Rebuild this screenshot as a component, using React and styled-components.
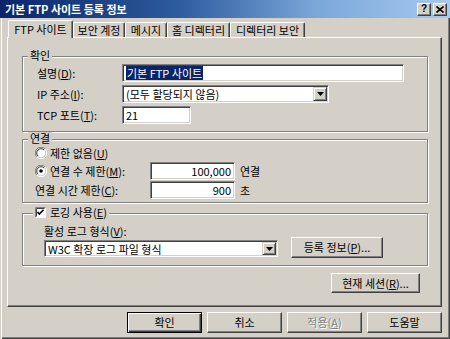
import React from "react";
import styled, { createGlobalStyle, css } from "styled-components";

const FACE = "#d4d0c8";

const GlobalStyle = createGlobalStyle`
  html, body { margin: 0; padding: 0; }
  body {
    width: 450px; height: 339px; overflow: hidden; background: ${FACE};
    font-family: "Noto Sans CJK KR", "Noto Sans", sans-serif;
    font-size: 11px; color: #000;
  }
  * { box-sizing: border-box; }
`;

const Window = styled.div`
  width: 450px; height: 339px;
  display: flex; flex-direction: column;
  background: ${FACE};
`;

const TitleBar = styled.div`
  height: 18px; flex: none;
  display: flex; align-items: center; justify-content: space-between;
  padding: 0 3px 0 5px;
  background: linear-gradient(to right, #0a246a 0%, #2e5c9e 40%, #7aa6d8 70%, #a6caf0 100%);
`;

const Title = styled.div`
  color: #fff; font-weight: bold; font-size: 11px; line-height: 13px; white-space: nowrap;
`;

const CaptionButtons = styled.div`
  display: flex; gap: 2px; align-items: center;
`;

const CaptionButton = styled.div`
  width: 14px; height: 13px;
  background: ${FACE};
  border: 1px solid; border-color: #fff #404040 #404040 #fff;
  box-shadow: inset -1px -1px #808080;
  display: flex; align-items: center; justify-content: center;
  font-family: "Liberation Sans", sans-serif; font-weight: bold; font-size: 10px; line-height: 10px;
`;

const Body = styled.div`
  flex: 1; display: flex; flex-direction: column;
  padding: 2px 8px 0 7px;
  box-shadow: inset 1px 0 ${FACE}, inset 2px 0 #fff, inset -1px -1px #404040, inset -2px -2px #808080;
`;

const TabStrip = styled.div`
  display: flex; align-items: flex-end; height: 17px; flex: none;
  padding-left: 1px; position: relative; z-index: 1;
`;

const Tab = styled.div`
  width: ${(p) => p.$w}px;
  height: ${(p) => (p.$active ? 18 : 15)}px;
  margin-bottom: ${(p) => (p.$active ? -1 : 0)}px;
  background: ${FACE};
  border-top: 1px solid #fff; border-left: 1px solid #fff; border-right: 1px solid #404040;
  box-shadow: inset -1px 0 #808080;
  border-radius: 2px 2px 0 0;
  display: flex; justify-content: center; align-items: flex-start;
  padding-top: ${(p) => (p.$active ? 2 : 1)}px;
  line-height: 13px; white-space: nowrap;
`;

const Panel = styled.div`
  height: 270px; flex: none;
  display: flex; flex-direction: column;
  border: 1px solid; border-color: #fff #404040 #404040 #fff;
  box-shadow: inset -1px -1px #808080;
  padding: 18px 13px 0 14px;
`;

const Group = styled.div`
  position: relative; flex: none;
  height: ${(p) => p.$h}px;
  margin-top: ${(p) => p.$mt || 0}px;
  border: 1px solid #808080;
  box-shadow: inset 1px 1px #fff, 1px 1px #fff;
  padding: ${(p) => p.$pad};
`;

const Legend = styled.div`
  position: absolute; top: -8px; left: ${(p) => p.$left}px;
  padding: 0 2px; background: ${FACE};
  display: flex; align-items: center; gap: 4px;
  line-height: 13px; white-space: nowrap;
`;

const FieldGrid = styled.div`
  display: grid;
  grid-template-columns: 85px auto;
  grid-auto-rows: 18px;
  row-gap: 3px;
  align-items: center;
`;

const LimitGrid = styled.div`
  display: grid;
  grid-template-columns: 115px 85px auto;
  grid-template-rows: 16px 18px 18px;
  row-gap: 1px;
  column-gap: 0;
  align-items: center;
`;

const Label = styled.div`
  line-height: 13px; white-space: nowrap;
  display: flex; align-items: center;
`;

const Unit = styled.div`
  line-height: 13px; padding-left: 5px; white-space: nowrap;
`;

const SpanAll = styled.div`
  grid-column: 1 / -1;
  display: flex; align-items: center; line-height: 13px; white-space: nowrap;
`;

const Key = styled.span`
  text-decoration: underline;
`;

const Field = styled.div`
  width: ${(p) => p.$w}px; height: ${(p) => p.$h || 18}px;
  background: #fff;
  border: 1px solid; border-color: #808080 #fff #fff #808080;
  box-shadow: inset 1px 1px #404040, inset -1px -1px ${FACE};
  padding: ${(p) => (p.$combo ? "1px 1px 1px 3px" : "0 3px")};
  display: flex; align-items: center;
  justify-content: ${(p) => (p.$right ? "flex-end" : "flex-start")};
  line-height: 14px; white-space: nowrap;
`;

const FieldText = styled.span`
  flex: 1; line-height: 14px;
`;

const Selected = styled.span`
  background: #0a246a; color: #fff; padding: 0 1px;
`;

const ArrowButton = styled.div`
  width: 14px; height: 100%; flex: none;
  background: ${FACE};
  border: 1px solid; border-color: ${FACE} #404040 #404040 ${FACE};
  box-shadow: inset 1px 1px #fff, inset -1px -1px #808080;
  display: flex; align-items: center; justify-content: center;
`;

const LogRow = styled.div`
  display: flex; align-items: flex-end;
`;

const LogColumn = styled.div`
  display: flex; flex-direction: column; gap: 2px;
`;

const Button = styled.button`
  width: ${(p) => p.$w}px; height: ${(p) => p.$h || 21}px; flex: none;
  margin: 0; padding: 0;
  font: inherit; line-height: 13px;
  background: ${FACE}; color: #000;
  border: 1px solid; border-color: #fff #404040 #404040 #fff;
  box-shadow: inset -1px -1px #808080;
  ${(p) =>
    p.$default &&
    css`
      border-color: #000;
      box-shadow: inset 1px 1px #fff, inset -1px -1px #404040, inset -2px -2px #808080;
    `}
  ${(p) =>
    p.disabled &&
    css`
      color: #808080; text-shadow: 1px 1px #fff;
    `}
`;

const SideButton = styled(Button)`
  margin-left: 13px; margin-bottom: -1px;
`;

const PanelFooter = styled.div`
  display: flex; justify-content: flex-end;
  margin-top: 7px; padding-right: 8px;
`;

const ButtonRow = styled.div`
  display: flex; justify-content: flex-end; gap: 5px;
  margin-top: 5px;
`;

const RadioRow = styled.div`
  display: flex; align-items: center; gap: 3px; line-height: 13px; white-space: nowrap;
`;

function Radio({ checked }) {
  return (
    <svg width="12" height="12" viewBox="0 0 12 12" style={{ flex: "none" }}>
      <circle cx="6" cy="6" r="5.5" fill={FACE} />
      <path d="M10.1 1.9 A5.5 5.5 0 0 0 1.9 10.1" stroke="#808080" strokeWidth="1" fill="none" />
      <path d="M1.9 10.1 A5.5 5.5 0 0 0 10.1 1.9" stroke="#fff" strokeWidth="1" fill="none" />
      <circle cx="6" cy="6" r="4.2" fill="#fff" />
      <path d="M9 3 A4.2 4.2 0 0 0 3 9" stroke="#404040" strokeWidth="1" fill="none" />
      {checked && <circle cx="6" cy="6" r="1.8" fill="#000" />}
    </svg>
  );
}

function Checkbox() {
  return (
    <svg width="11" height="11" viewBox="0 0 11 11" style={{ flex: "none" }}>
      <rect x="0" y="0" width="11" height="11" fill="#fff" />
      <path d="M0.5 10.5 V0.5 H10.5" stroke="#808080" fill="none" />
      <path d="M1.5 9.5 V1.5 H9.5" stroke="#404040" fill="none" />
      <path d="M2.5 5 L4.3 7 L8.5 2.8" stroke="#000" strokeWidth="1.6" fill="none" />
    </svg>
  );
}

function DownArrow() {
  return (
    <svg width="7" height="4" viewBox="0 0 7 4">
      <path d="M0 0 H7 L3.5 4 Z" fill="#000" />
    </svg>
  );
}

function Combo({ w, h, children }) {
  return (
    <Field $w={w} $h={h} $combo>
      <FieldText>{children}</FieldText>
      <ArrowButton>
        <DownArrow />
      </ArrowButton>
    </Field>
  );
}

export default function App() {
  return (
    <>
      <GlobalStyle />
      <Window>
        <TitleBar>
          <Title>기본 FTP 사이트 등록 정보</Title>
          <CaptionButtons>
            <CaptionButton>?</CaptionButton>
            <CaptionButton>
              <svg width="8" height="7" viewBox="0 0 8 7">
                <path d="M0.5 0.5 L7.5 6.5 M7.5 0.5 L0.5 6.5" stroke="#000" strokeWidth="1.6" />
              </svg>
            </CaptionButton>
          </CaptionButtons>
        </TitleBar>
        <Body>
          <TabStrip>
            <Tab $w={65} $active>FTP 사이트</Tab>
            <Tab $w={52}>보안 계정</Tab>
            <Tab $w={42}>메시지</Tab>
            <Tab $w={63}>홈 디렉터리</Tab>
            <Tab $w={75}>디렉터리 보안</Tab>
          </TabStrip>
          <Panel>
            <Group $h={76} $pad="7px 0 0 14px">
              <Legend $left={5}>확인</Legend>
              <FieldGrid>
                <Label>
                  설명(<Key>D</Key>):
                </Label>
                <Field $w={282}>
                  <Selected>기본 FTP 사이트</Selected>
                </Field>
                <Label>
                  IP 주소(<Key>I</Key>):
                </Label>
                <Combo w={207}>(모두 할당되지 않음)</Combo>
                <Label>
                  TCP 포트(<Key>T</Key>):
                </Label>
                <Field $w={69}>21</Field>
              </FieldGrid>
            </Group>

            <Group $h={64} $mt={7} $pad="5px 0 0 12px">
              <Legend $left={5}>연결</Legend>
              <LimitGrid>
                <SpanAll>
                  <RadioRow>
                    <Radio />
                    <span>
                      제한 없음(<Key>U</Key>)
                    </span>
                  </RadioRow>
                </SpanAll>
                <RadioRow>
                  <Radio checked />
                  <span>
                    연결 수 제한(<Key>M</Key>):
                  </span>
                </RadioRow>
                <Field $w={85} $right>
                  100,000
                </Field>
                <Unit>연결</Unit>
                <Label>
                  연결 시간 제한(<Key>C</Key>):
                </Label>
                <Field $w={85} $right>
                  900
                </Field>
                <Unit>초</Unit>
              </LimitGrid>
            </Group>

            <Group $h={53} $mt={10} $pad="11px 0 0 21px">
              <Legend $left={10}>
                <Checkbox />
                <span>
                  로깅 사용(<Key>E</Key>)
                </span>
              </Legend>
              <LogRow>
                <LogColumn>
                  <Label>
                    활성 로그 형식(<Key>V</Key>):
                  </Label>
                  <Combo w={234} h={17}>
                    W3C 확장 로그 파일 형식
                  </Combo>
                </LogColumn>
                <SideButton $w={92}>
                  등록 정보(<Key>P</Key>)...
                </SideButton>
              </LogRow>
            </Group>

            <PanelFooter>
              <Button $w={89} $h={20}>
                현재 세션(<Key>R</Key>)...
              </Button>
            </PanelFooter>
          </Panel>
          <ButtonRow>
            <Button $w={75} $default>
              확인
            </Button>
            <Button $w={75}>취소</Button>
            <Button $w={75} disabled>
              적용(<Key>A</Key>)
            </Button>
            <Button $w={75}>도움말</Button>
          </ButtonRow>
        </Body>
      </Window>
    </>
  );
}
